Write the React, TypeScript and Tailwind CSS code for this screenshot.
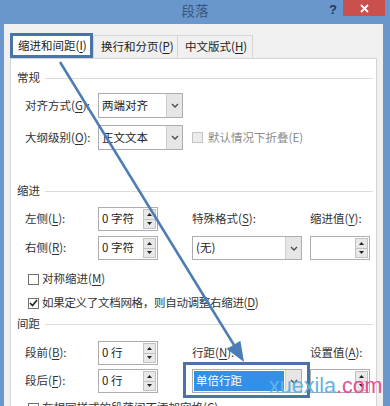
import React from "react";

const U = ({ c }: { c: string }) => (
  <span className="underline underline-offset-[2px] decoration-[1px]">{c}</span>
);

function Chevron() {
  return (
    <svg width="8" height="5" viewBox="0 0 8 5">
      <path d="M1 1 L4 4 L7 1" fill="none" stroke="#4a4a4a" strokeWidth="1.3" />
    </svg>
  );
}

function Select({
  value,
  className,
  selected,
}: {
  value: string;
  className: string;
  selected?: boolean;
}) {
  return (
    <div className={`h-full border border-[#abadb3] bg-white flex ${className}`}>
      {selected ? (
        <div className="flex-1 m-[1px] bg-[#3390e8] text-white flex items-center pl-[2px]">{value}</div>
      ) : (
        <div className="flex-1 flex items-center pl-[3px] text-[#222]">{value}</div>
      )}
      <div className="w-[16px] bg-[#e6e6e6] border-l border-[#cfcfcf] flex items-center justify-center">
        <Chevron />
      </div>
    </div>
  );
}

function Spin({ value }: { value: string }) {
  return (
    <div className="w-[60px] h-full border border-[#abadb3] bg-white flex">
      <div className="flex-1 flex items-center pl-[3px] text-[#222]">{value}</div>
      <div className="w-[14px] flex flex-col py-[1px] pr-[1px]">
        <div className="flex-1 bg-[#e8e8e8] border border-[#c2c2c2] flex items-center justify-center">
          <svg width="5" height="3" viewBox="0 0 5 3">
            <path d="M0 3 L2.5 0 L5 3Z" fill="#222" />
          </svg>
        </div>
        <div className="flex-1 bg-[#e8e8e8] border border-t-0 border-[#c2c2c2] flex items-center justify-center">
          <svg width="5" height="3" viewBox="0 0 5 3">
            <path d="M0 0 L2.5 3 L5 0Z" fill="#222" />
          </svg>
        </div>
      </div>
    </div>
  );
}

function Check({ checked, disabled }: { checked?: boolean; disabled?: boolean }) {
  return (
    <div
      className={`w-[11px] h-[11px] border flex items-center justify-center ${
        disabled ? "border-[#c4c4c4] bg-[#ececec]" : "border-[#707070] bg-white"
      }`}
    >
      {checked && (
        <svg width="9" height="8" viewBox="0 0 9 8">
          <path d="M1 4 L3.5 6.5 L8 1" fill="none" stroke="#222" strokeWidth="1.6" />
        </svg>
      )}
    </div>
  );
}

function Header({ text, className }: { text: string; className: string }) {
  return (
    <div className={`h-[20px] flex items-center pl-[6px] pr-[3px] ${className}`}>
      <span className="text-[#333]">{text}</span>
      <div className="flex-1 h-px bg-[#dcdcdc] ml-[5px]" />
    </div>
  );
}

export default function App() {
  return (
    <div
      className="w-[390px] h-[406px] overflow-hidden relative bg-[#6a96ce] flex flex-col text-[11.5px] leading-none text-[#333]"
      style={{ fontFamily: "'Noto Sans CJK SC', 'Noto Sans', sans-serif" }}
    >
      {/* Title bar */}
      <div className="h-[24px] shrink-0 grid grid-cols-[1fr_auto_1fr]">
        <div />
        <div className="flex items-center text-[13.5px] text-[#3a5677] pb-[2px]">段落</div>
        <div className="flex justify-end items-start">
          <span className="text-[13px] font-bold text-[#223a58] mt-[3px] mr-[6px] font-['Liberation_Sans']">?</span>
          <div className="w-[42px] h-[16px] bg-[#c9504c] flex items-center justify-center mr-[5px]">
            <svg width="9" height="9" viewBox="0 0 9 9">
              <path d="M1 1 L8 8 M8 1 L1 8" stroke="#fff" strokeWidth="1.8" />
            </svg>
          </div>
        </div>
      </div>

      {/* Body */}
      <div className="flex-1 ml-[4px] mr-[7px] bg-[#f0f0f0] px-[6px] pt-[9px] flex flex-col">
        {/* Tabs */}
        <div className="h-[25px] flex items-stretch shrink-0">
          <div className="w-[83px] bg-white border-[3px] border-[#4a74a6] flex items-center pl-[5px] text-[#222]">
            缩进和间距(<U c="I" />)
          </div>
          <div className="w-[85px] border border-b-0 border-[#d5d5d5] mt-[2px] flex items-center pl-[7px] text-[#222]">
            换行和分页(<U c="P" />)
          </div>
          <div className="w-[75px] border border-b-0 border-l-0 border-[#d5d5d5] mt-[2px] flex items-center pl-[7px] text-[#222]">
            中文版式(<U c="H" />)
          </div>
        </div>

        {/* Panel */}
        <div className="flex-1 bg-white border border-[#d5d5d5] flex flex-col">
          <Header text="常规" className="mt-[9px]" />

          <div className="mt-[5px] h-[25px] flex items-center pl-[14px]">
            <div className="w-[73px]">
              对齐方式(<U c="G" />):
            </div>
            <Select value="两端对齐" className="w-[85px]" />
          </div>

          <div className="mt-[7px] h-[25px] flex items-center pl-[14px]">
            <div className="w-[73px]">
              大纲级别(<U c="O" />):
            </div>
            <Select value="正文文本" className="w-[85px]" />
            <div className="ml-[9px] flex items-center gap-[5px]">
              <Check disabled />
              <span className="text-[#8c8c8c]">默认情况下折叠(E)</span>
            </div>
          </div>

          <Header text="缩进" className="mt-[31px]" />

          <div className="mt-[6px] h-[24px] flex items-center pl-[14px]">
            <div className="w-[73px]">
              左侧(<U c="L" />):
            </div>
            <Spin value="0 字符" />
            <div className="w-[34px]" />
            <div className="w-[118px]">
              特殊格式(<U c="S" />):
            </div>
            <div>
              缩进值(<U c="Y" />):
            </div>
          </div>

          <div className="mt-[5px] h-[24px] flex items-center pl-[14px]">
            <div className="w-[73px]">
              右侧(<U c="R" />):
            </div>
            <Spin value="0 字符" />
            <div className="w-[34px]" />
            <Select value="(无)" className="w-[110px]" />
            <div className="w-[8px]" />
            <Spin value="" />
          </div>

          <div className="mt-[9px] h-[20px] flex items-center pl-[17px] gap-[3px]">
            <Check />
            <span>
              对称缩进(<U c="M" />)
            </span>
          </div>

          <div className="mt-[4px] h-[20px] flex items-center pl-[17px] gap-[3px]">
            <Check checked />
            <span className="tracking-[-0.3px]">
              如果定义了文档网格，则自动调整右缩进(<U c="D" />)
            </span>
          </div>

          <Header text="间距" className="mt-[1px]" />

          <div className="mt-[7px] h-[24px] flex items-center pl-[14px]">
            <div className="w-[73px]">
              段前(<U c="B" />):
            </div>
            <Spin value="0 行" />
            <div className="w-[34px]" />
            <div className="w-[118px]">
              行距(<U c="N" />):
            </div>
            <div>
              设置值(<U c="A" />):
            </div>
          </div>

          <div className="mt-[4px] h-[24px] flex items-center pl-[14px]">
            <div className="w-[73px]">
              段后(<U c="F" />):
            </div>
            <Spin value="0 行" />
            <div className="w-[34px]" />
            <div className="relative h-full">
              <Select value="单倍行距" className="w-[110px]" selected />
              <div className="absolute -top-[7px] -bottom-[5px] -left-[9px] -right-[8px] border-[3px] border-[#4a74a6]" />
            </div>
            <div className="w-[8px]" />
            <Spin value="" />
          </div>

          <div className="mt-[5px] h-[20px] flex items-center pl-[17px] gap-[3px]">
            <Check />
            <span>
              在相同样式的段落间不添加空格(<U c="C" />)
            </span>
          </div>
        </div>
      </div>

      {/* Annotation arrow */}
      <svg className="absolute left-0 top-0 pointer-events-none" width="390" height="406" viewBox="0 0 390 406">
        <line x1="60" y1="62" x2="234" y2="345" stroke="#4c7cb6" strokeWidth="2.5" />
        <polygon points="244,362 226.8,349.1 240.4,340.7" fill="#4c7cb6" />
      </svg>

      {/* Watermark */}
      <div
        className="absolute left-[269px] top-[376px] text-[21.5px] leading-none pointer-events-none"
        style={{ fontFamily: "'Liberation Sans', Arial, sans-serif" }}
      >
        <span className="text-[#62b4e4]">xuexila</span>
        <span className="text-[#e8508e]">.com</span>
      </div>
    </div>
  );
}
